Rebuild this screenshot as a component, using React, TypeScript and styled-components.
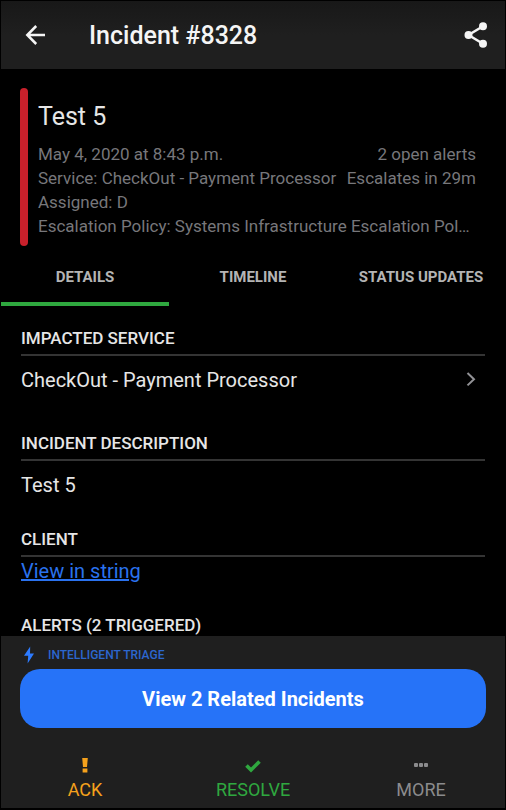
import React from "react";
import styled, { createGlobalStyle } from "styled-components";

const GlobalStyle = createGlobalStyle`
  *, *::before, *::after { box-sizing: border-box; }
  body {
    margin: 0;
    background: #000;
    color: #e6e6e6;
    font-family: Roboto, "Liberation Sans", sans-serif;
  }
  button {
    border: 0;
    padding: 0;
    background: none;
    color: inherit;
    font-family: inherit;
    cursor: pointer;
  }
`;

const Screen = styled.div`
  display: flex;
  flex-direction: column;
  height: 100vh;
  border: 1px solid #000;
  border-bottom-width: 2px;
  background: #000;
`;

const AppBar = styled.header`
  display: flex;
  align-items: center;
  flex: none;
  height: 68px;
  padding: 0 15px 0 20px;
  background: linear-gradient(#181818, #1f1f1f 50%);
  color: #f5f5f5;
`;

const BarTitle = styled.h1`
  flex: 1;
  margin: 0 0 0 40px;
  padding-top: 2px;
  font-size: 25px;
  line-height: 32px;
  font-weight: 500;
`;

const IconButton = styled.button`
  display: grid;
  place-items: center;
  width: 28px;
  height: 28px;
`;

const Content = styled.main`
  flex: 1;
  min-height: 0;
  overflow-y: auto;
  scrollbar-width: none;
`;

const Summary = styled.section`
  display: flex;
  gap: 10px;
  margin: 19px 29px 0 19px;
`;

const UrgencyBar = styled.div`
  flex: none;
  width: 8px;
  border-radius: 4px;
  background: #c8202b;
`;

const SummaryBody = styled.div`
  flex: 1;
  min-width: 0;
  padding: 9px 0 8px;
`;

const SummaryTitle = styled.h2`
  margin: 0 0 5px;
  font-size: 25px;
  line-height: 40px;
  font-weight: 400;
`;

const SummaryLine = styled.div`
  display: flex;
  justify-content: space-between;
  color: #77777b;
  font-size: 17px;
  line-height: 24px;
  white-space: nowrap;
`;

const Tabs = styled.div`
  display: grid;
  grid-template-columns: repeat(3, 1fr);
`;

const Tab = styled.button<{ $active?: boolean }>`
  height: 60px;
  padding-top: 6px;
  border-bottom: 4px solid ${(p) => (p.$active ? "#2fa83f" : "transparent")};
  color: #b4b4b4;
  font-size: 15px;
  font-weight: 700;
  white-space: nowrap;
`;

const Section = styled.section`
  margin: 0 20px 28px;
`;

const SectionTitle = styled.h3`
  margin: 0;
  padding-bottom: 4px;
  border-bottom: 2px solid #343434;
  font-size: 17px;
  line-height: 24px;
  font-weight: 500;
`;

const Sections = styled.div`
  padding-top: 20px;
`;

const ServiceRow = styled.button`
  display: flex;
  align-items: center;
  justify-content: space-between;
  width: 100%;
  padding: 10px 9px 9px 0;
  font-size: 20px;
  line-height: 28px;
`;

const Description = styled.p`
  margin: 0;
  padding-top: 10px;
  font-size: 20px;
  line-height: 28px;
`;

const ClientLink = styled.a`
  display: inline-block;
  vertical-align: top;
  color: #2a72ee;
  font-size: 20px;
  line-height: 28px;
`;

const Footer = styled.footer`
  flex: none;
  padding: 6px 19px;
  background: #1f1f1f;
`;

const TriageLabel = styled.div`
  display: flex;
  align-items: center;
  gap: 14px;
  height: 27px;
  padding: 0 0 2px 4px;
  color: #2c67cf;
  font-size: 12px;
  font-weight: 500;
`;

const PrimaryButton = styled.button`
  display: block;
  width: 100%;
  height: 59px;
  border-radius: 20px;
  background: #2673f8;
  color: #fff;
  font-size: 20px;
  font-weight: 700;
`;

const Actions = styled.nav`
  display: grid;
  grid-template-columns: repeat(3, 1fr);
  margin: 29px -19px 0;
`;

const Action = styled.button<{ $color: string }>`
  display: flex;
  flex-direction: column;
  align-items: center;
  gap: 5px;
  color: ${(p) => p.$color};
  font-size: 18px;
  line-height: 24px;
`;

const BackIcon = () => (
  <svg width="22" height="22" viewBox="0 0 22 22" fill="none" stroke="currentColor" strokeWidth="2.5" aria-hidden="true">
    <path d="M21 11H3.5M12.2 2 3.3 11l8.9 9" />
  </svg>
);

const ShareIcon = () => (
  <svg width="26" height="28" viewBox="0 0 26 28" aria-hidden="true">
    <path d="M20 5.3 5.5 14 20 22.7" fill="none" stroke="currentColor" strokeWidth="2.5" />
    <g fill="currentColor">
      <circle cx="20" cy="5.3" r="4" />
      <circle cx="5.5" cy="14" r="4" />
      <circle cx="20" cy="22.7" r="4" />
    </g>
  </svg>
);

const ChevronIcon = () => (
  <svg width="10" height="16" viewBox="0 0 10 16" fill="none" stroke="#929296" strokeWidth="2" aria-hidden="true">
    <path d="M1.5 1 8 7.2l-6.5 6.2" />
  </svg>
);

const BoltIcon = () => (
  <svg width="10" height="18" viewBox="0 0 10 18" fill="#2d7bff" aria-hidden="true">
    <path d="M6.2.5 0 9.8h4.2L3.6 17.5 10 7.6H6z" />
  </svg>
);

const AlertIcon = () => (
  <svg width="16" height="16" viewBox="0 0 16 16" fill="currentColor" aria-hidden="true">
    <path d="M5.2 1h5.6l-.8 9H6zM5.6 11.5h4.8v4H5.6z" />
  </svg>
);

const CheckIcon = () => (
  <svg width="16" height="16" viewBox="0 0 16 16" fill="none" stroke="currentColor" strokeWidth="3.6" aria-hidden="true">
    <path d="M1.5 8.5 6 13l8.5-8.5" />
  </svg>
);

const MoreIcon = () => (
  <svg width="16" height="16" viewBox="0 0 16 16" fill="currentColor" aria-hidden="true">
    <rect x="1" y="6" width="4" height="4" rx="1" />
    <rect x="6" y="6" width="4" height="4" rx="1" />
    <rect x="11" y="6" width="4" height="4" rx="1" />
  </svg>
);

export default function App() {
  return (
    <Screen>
      <GlobalStyle />
      <AppBar>
        <IconButton type="button" aria-label="Back">
          <BackIcon />
        </IconButton>
        <BarTitle>Incident #8328</BarTitle>
        <IconButton type="button" aria-label="Share">
          <ShareIcon />
        </IconButton>
      </AppBar>

      <Content>
        <Summary>
          <UrgencyBar />
          <SummaryBody>
            <SummaryTitle>Test 5</SummaryTitle>
            <SummaryLine>
              <span>May 4, 2020 at 8:43 p.m.</span>
              <span>2 open alerts</span>
            </SummaryLine>
            <SummaryLine>
              <span>Service: CheckOut - Payment Processor</span>
              <span>Escalates in 29m</span>
            </SummaryLine>
            <SummaryLine>Assigned: D</SummaryLine>
            <SummaryLine>Escalation Policy: Systems Infrastructure Escalation Pol…</SummaryLine>
          </SummaryBody>
        </Summary>

        <Tabs role="tablist">
          <Tab type="button" role="tab" aria-selected="true" $active>DETAILS</Tab>
          <Tab type="button" role="tab" aria-selected="false">TIMELINE</Tab>
          <Tab type="button" role="tab" aria-selected="false">STATUS UPDATES</Tab>
        </Tabs>

        <Sections>
          <Section>
            <SectionTitle>IMPACTED SERVICE</SectionTitle>
            <ServiceRow type="button">
              CheckOut - Payment Processor
              <ChevronIcon />
            </ServiceRow>
          </Section>
          <Section>
            <SectionTitle>INCIDENT DESCRIPTION</SectionTitle>
            <Description>Test 5</Description>
          </Section>
          <Section>
            <SectionTitle>CLIENT</SectionTitle>
            <ClientLink href="#client">View in string</ClientLink>
          </Section>
          <Section>
            <SectionTitle>ALERTS (2 TRIGGERED)</SectionTitle>
          </Section>
        </Sections>
      </Content>

      <Footer>
        <TriageLabel>
          <BoltIcon />
          INTELLIGENT TRIAGE
        </TriageLabel>
        <PrimaryButton type="button">View 2 Related Incidents</PrimaryButton>
        <Actions>
          <Action type="button" $color="#f5a11c">
            <AlertIcon />
            ACK
          </Action>
          <Action type="button" $color="#2fa83f">
            <CheckIcon />
            RESOLVE
          </Action>
          <Action type="button" $color="#8b8b8d">
            <MoreIcon />
            MORE
          </Action>
        </Actions>
      </Footer>
    </Screen>
  );
}
